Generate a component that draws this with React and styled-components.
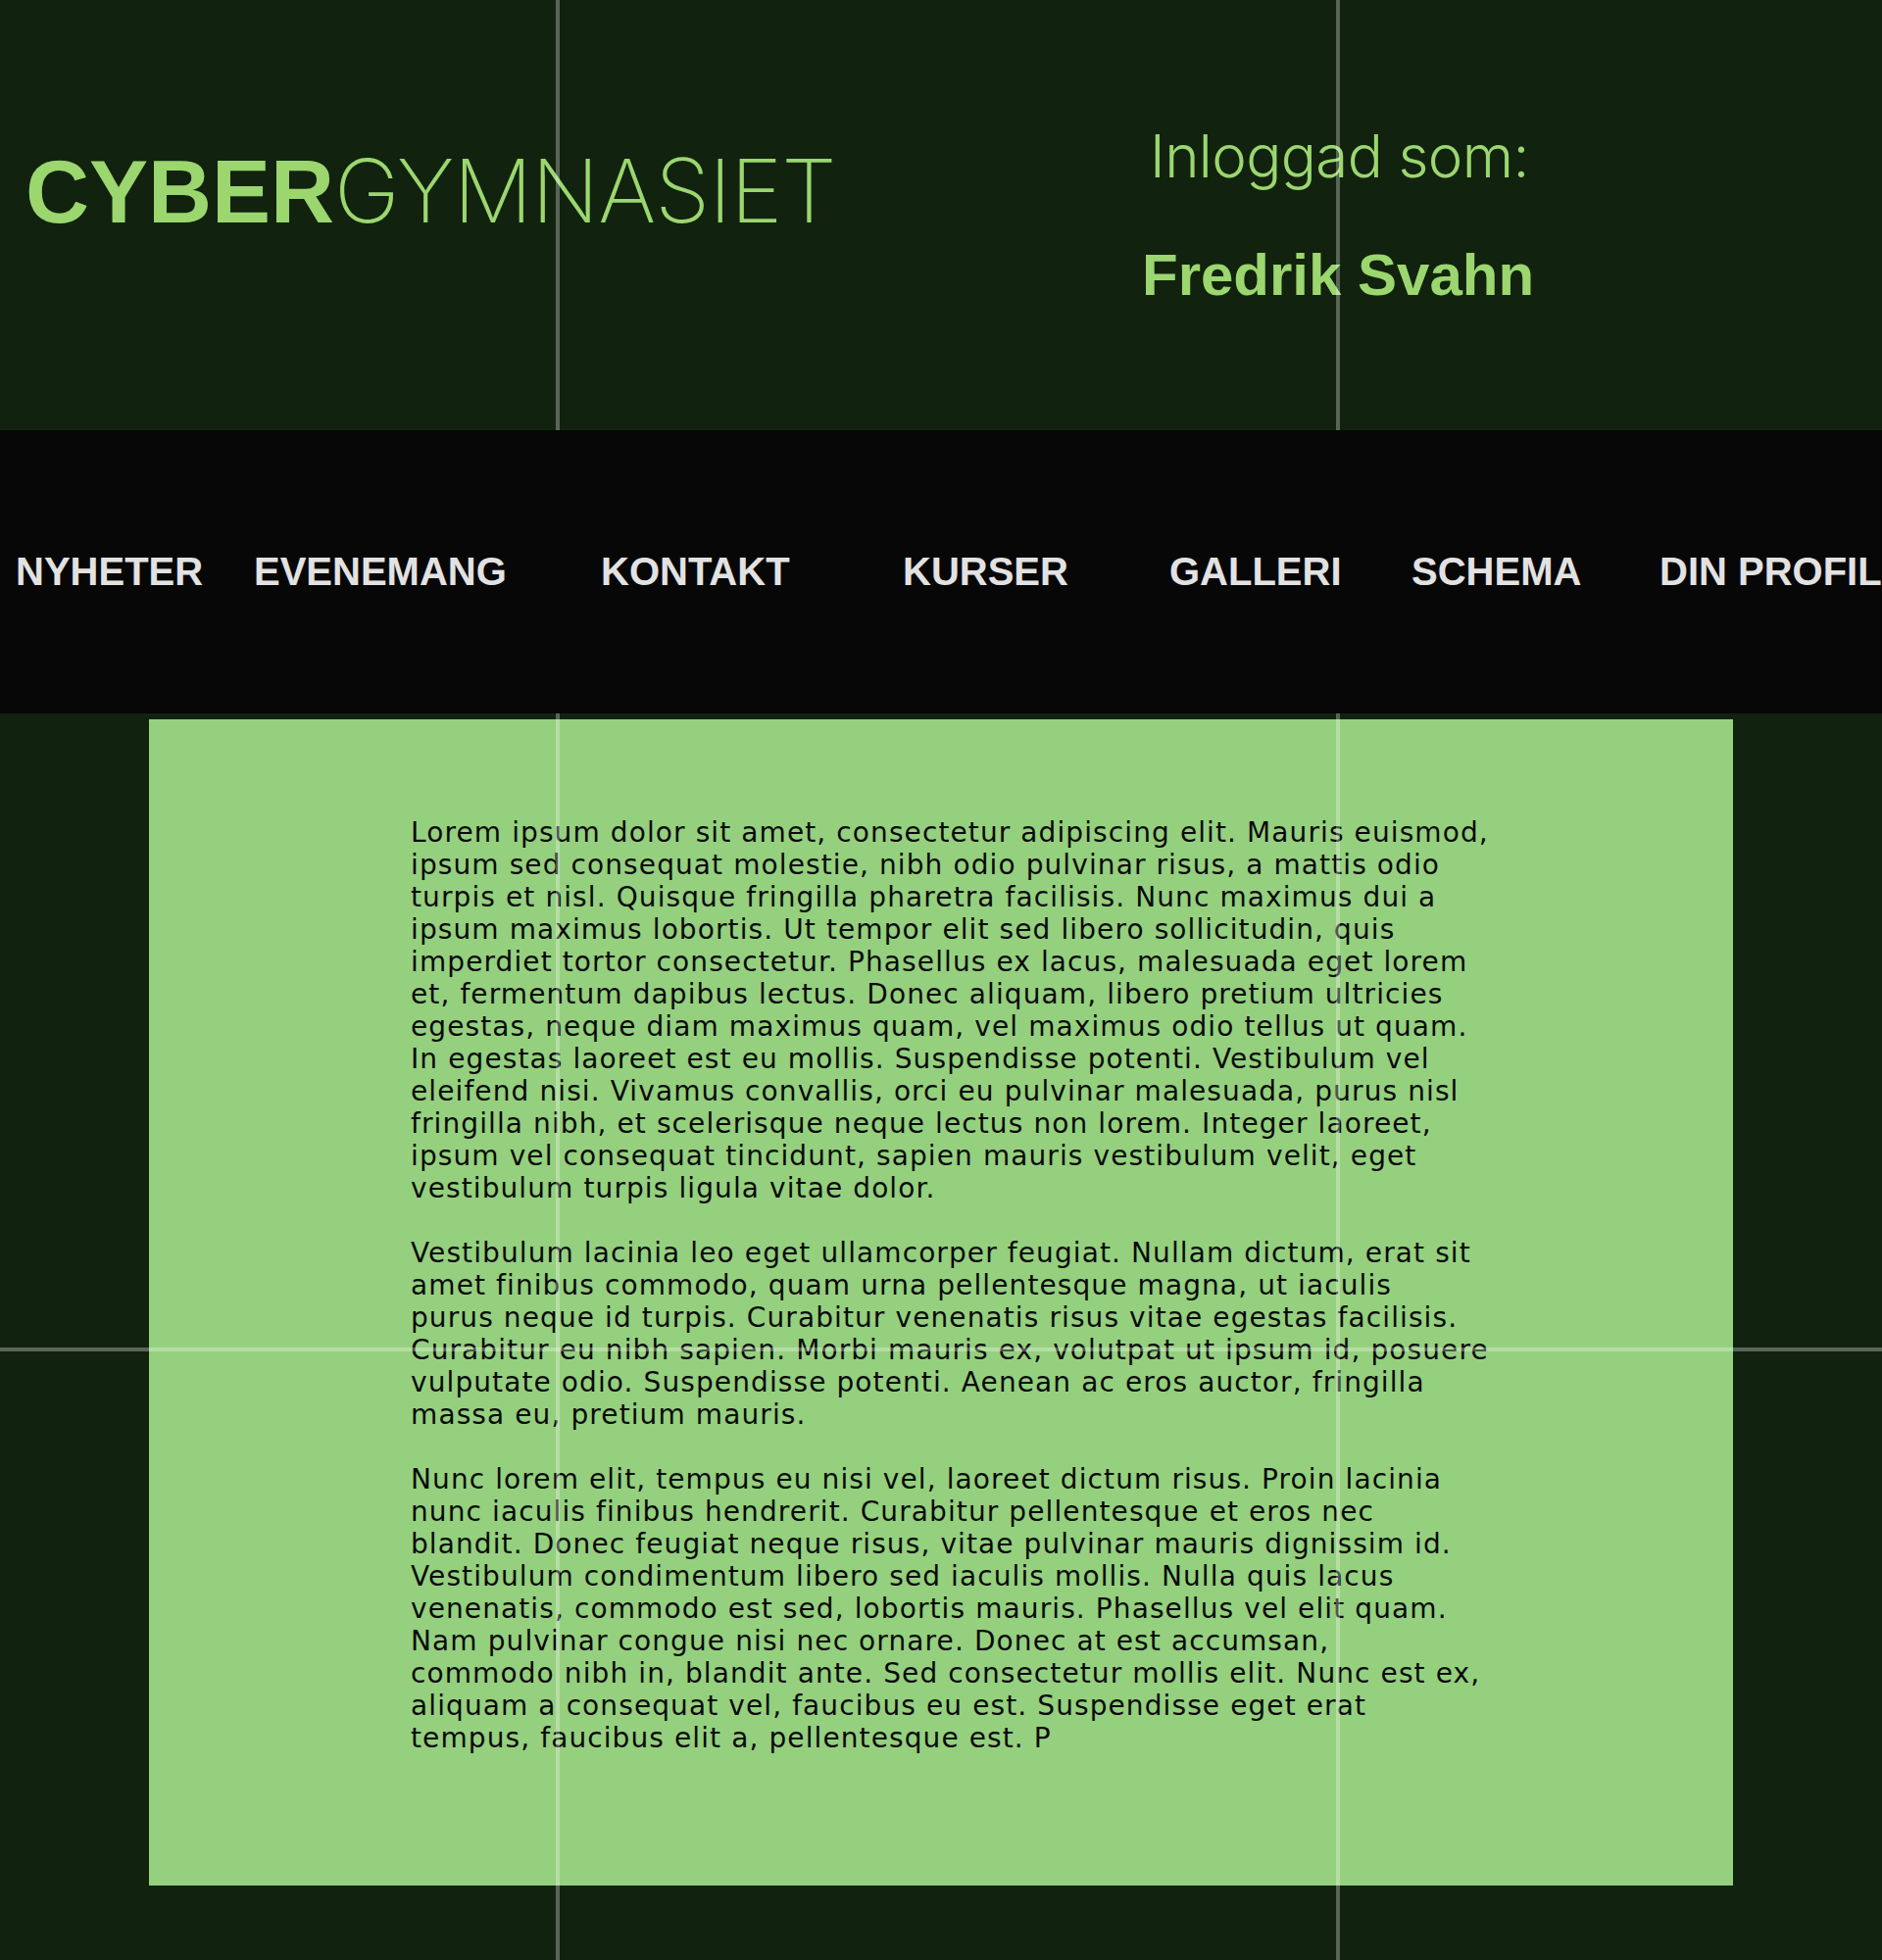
import React from 'react';
import styled, { createGlobalStyle } from 'styled-components';

const GlobalStyle = createGlobalStyle`
  html, body {
    margin: 0;
    padding: 0;
    background: #11230f;
  }
`;

const Page = styled.div`
  position: relative;
  min-height: 2000px;
  overflow: hidden;
`;

const GridLine = styled.div`
  position: absolute;
  z-index: 1;
  pointer-events: none;
  background: rgba(255, 255, 255, 0.3);
  ${({ vertical, at }) =>
    vertical
      ? `top: 0; bottom: 0; left: ${at}px; width: 4px;`
      : `left: 0; right: 0; top: ${at}px; height: 4px;`}
`;

const Header = styled.header`
  height: 439px;
  display: grid;
  grid-template-columns: 1139px 1fr;
  color: #9bd66f;
`;

const Logo = styled.h1`
  margin: 0;
  padding: 150px 0 0 26px;
  font-size: 90px;
  line-height: 90px;
  white-space: nowrap;
  font-weight: normal;
`;

const LogoBold = styled.span`
  font-family: "Liberation Sans", Arial, sans-serif;
  font-weight: 700;
`;

const LogoThin = styled.span`
  font-family: Inter, "Liberation Sans", sans-serif;
  font-weight: 200;
  letter-spacing: -1px;
`;

const Account = styled.div`
  padding-top: 129px;
  display: flex;
  flex-direction: column;
`;

const AccountLabel = styled.div`
  font-family: Inter, "Liberation Sans", sans-serif;
  font-weight: 300;
  font-size: 60px;
  line-height: 60px;
  padding-left: 34px;
  letter-spacing: -0.6px;
`;

const AccountName = styled.div`
  margin-top: 62px;
  font-family: "Liberation Sans", Arial, sans-serif;
  font-weight: 700;
  font-size: 60px;
  line-height: 60px;
  padding-left: 26px;
`;

const Nav = styled.nav`
  position: relative;
  z-index: 2;
  height: 289px;
  background: #070707;
  display: grid;
  grid-template-columns: 243px 354px 308px 272px 247px 253px auto;
  align-items: center;
  padding-left: 16px;
  white-space: nowrap;
`;

const NavItem = styled.a`
  font-family: "Liberation Sans", Arial, sans-serif;
  font-weight: 700;
  font-size: 40px;
  color: #e2e2e2;
  text-decoration: none;
`;

const Main = styled.main`
  padding-top: 6px;
`;

const Card = styled.section`
  width: 1616px;
  height: 1190px;
  margin: 0 auto;
  background: #95d07f;
  box-sizing: border-box;
  padding-top: 99px;
`;

const Article = styled.article`
  width: 1100px;
  margin: 0 auto;
  padding-left: 18px;
  font-family: "DejaVu Sans", sans-serif;
  font-size: 28px;
  line-height: 33px;
  color: #0a0a0a;
`;

const Paragraph = styled.p`
  margin: 0 0 33px;
`;

const Line = styled.span`
  display: block;
  white-space: nowrap;
  letter-spacing: 1.1px;
`;

const navItems = ['NYHETER', 'EVENEMANG', 'KONTAKT', 'KURSER', 'GALLERI', 'SCHEMA', 'DIN PROFIL'];

const paragraphs = [
  [
    'Lorem ipsum dolor sit amet, consectetur adipiscing elit. Mauris euismod,',
    'ipsum sed consequat molestie, nibh odio pulvinar risus, a mattis odio',
    'turpis et nisl. Quisque fringilla pharetra facilisis. Nunc maximus dui a',
    'ipsum maximus lobortis. Ut tempor elit sed libero sollicitudin, quis',
    'imperdiet tortor consectetur. Phasellus ex lacus, malesuada eget lorem',
    'et, fermentum dapibus lectus. Donec aliquam, libero pretium ultricies',
    'egestas, neque diam maximus quam, vel maximus odio tellus ut quam.',
    'In egestas laoreet est eu mollis. Suspendisse potenti. Vestibulum vel',
    'eleifend nisi. Vivamus convallis, orci eu pulvinar malesuada, purus nisl',
    'fringilla nibh, et scelerisque neque lectus non lorem. Integer laoreet,',
    'ipsum vel consequat tincidunt, sapien mauris vestibulum velit, eget',
    'vestibulum turpis ligula vitae dolor.',
  ],
  [
    'Vestibulum lacinia leo eget ullamcorper feugiat. Nullam dictum, erat sit',
    'amet finibus commodo, quam urna pellentesque magna, ut iaculis',
    'purus neque id turpis. Curabitur venenatis risus vitae egestas facilisis.',
    'Curabitur eu nibh sapien. Morbi mauris ex, volutpat ut ipsum id, posuere',
    'vulputate odio. Suspendisse potenti. Aenean ac eros auctor, fringilla',
    'massa eu, pretium mauris.',
  ],
  [
    'Nunc lorem elit, tempus eu nisi vel, laoreet dictum risus. Proin lacinia',
    'nunc iaculis finibus hendrerit. Curabitur pellentesque et eros nec',
    'blandit. Donec feugiat neque risus, vitae pulvinar mauris dignissim id.',
    'Vestibulum condimentum libero sed iaculis mollis. Nulla quis lacus',
    'venenatis, commodo est sed, lobortis mauris. Phasellus vel elit quam.',
    'Nam pulvinar congue nisi nec ornare. Donec at est accumsan,',
    'commodo nibh in, blandit ante. Sed consectetur mollis elit. Nunc est ex,',
    'aliquam a consequat vel, faucibus eu est. Suspendisse eget erat',
    'tempus, faucibus elit a, pellentesque est. P',
  ],
];

export default function App() {
  return (
    <Page>
      <GlobalStyle />
      <GridLine vertical at={567} />
      <GridLine vertical at={1363} />
      <GridLine at={1375} />

      <Header>
        <Logo>
          <LogoBold>CYBER</LogoBold>
          <LogoThin>GYMNASIET</LogoThin>
        </Logo>
        <Account>
          <AccountLabel>Inloggad som:</AccountLabel>
          <AccountName>Fredrik Svahn</AccountName>
        </Account>
      </Header>

      <Nav>
        {navItems.map((item) => (
          <NavItem key={item} href="#">{item}</NavItem>
        ))}
      </Nav>

      <Main>
        <Card>
          <Article>
            {paragraphs.map((lines, i) => (
              <Paragraph key={i}>
                {lines.map((line, j) => (
                  <Line key={j}>{line}</Line>
                ))}
              </Paragraph>
            ))}
          </Article>
        </Card>
      </Main>
    </Page>
  );
}
